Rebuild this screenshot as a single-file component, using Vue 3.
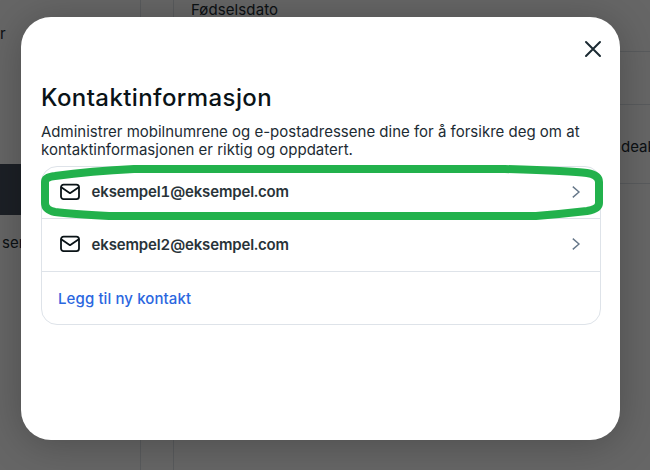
<script setup>
const contacts = ['eksempel1@eksempel.com', 'eksempel2@eksempel.com']
</script>

<template>
  <div class="page">
    <div class="sidebar">
      <span class="side-r">r</span>
      <div class="side-block"></div>
      <span class="side-ser">ser</span>
    </div>
    <div class="gutter"></div>
    <div class="main">
      <div class="main-row first"><span>Fødselsdato</span></div>
      <div class="main-row second"></div>
      <div class="main-row third"><span class="deak">deak</span></div>
    </div>

    <div class="overlay">
      <section class="modal">
        <button class="close" aria-label="Lukk">
          <svg width="24" height="24" viewBox="0 0 24 24" fill="none" stroke="#1c2b33" stroke-width="2" stroke-linecap="round">
            <path d="M5 5 19 19M19 5 5 19" />
          </svg>
        </button>
        <h2 class="title">Kontaktinformasjon</h2>
        <p class="desc">Administrer mobilnumrene og e-postadressene dine for å forsikre deg om at kontaktinformasjonen er riktig og oppdatert.</p>
        <div class="card">
          <div v-for="c in contacts" :key="c" class="row contact">
            <svg class="mail" width="20" height="20" viewBox="0 0 20 20" fill="none" stroke="#0a1317" stroke-width="1.8" stroke-linejoin="round" stroke-linecap="round">
              <rect x="1" y="2.6" width="18" height="14.6" rx="2.6" />
              <path d="M1.6 5.4 10 11.2l8.4-5.8" />
            </svg>
            <span class="addr">{{ c }}</span>
            <svg class="chev" width="10" height="14" viewBox="0 0 10 14" fill="none" stroke="#67788a" stroke-width="1.4">
              <path d="M1.8 1.6 8 7l-6.2 5.4" />
            </svg>
          </div>
          <div class="row add"><span>Legg til ny kontakt</span></div>
        </div>
        <svg class="mark" width="600" height="70" viewBox="0 0 600 70" fill="none" stroke="#22b14c" stroke-width="8" stroke-linejoin="round">
          <path d="M24 20Q24 15 34 14Q70 9 113 7L484 7Q550 9 566 11Q578 13 578 20L578 41Q578 47 566 49Q540 52 515 54L88 54Q50 52 34 50Q24 48 24 41Z" />
        </svg>
      </section>
    </div>
  </div>
</template>

<style scoped>
.page {
  position: relative;
  display: flex;
  width: 650px;
  height: 470px;
  overflow: hidden;
  background: #fff;
  font-family: Inter, "Liberation Sans", sans-serif;
  color: #1c2b33;
}
.sidebar {
  flex: none;
  width: 140px;
  border-right: 1px solid #dee3e9;
  display: flex;
  flex-direction: column;
  font-size: 15px;
}
.side-r { margin-top: 24px; height: 19px; line-height: 19px; }
.side-block { margin-top: 121px; height: 51px; background: #465260; }
.side-ser { margin-top: 18px; margin-left: 2px; line-height: 19px; }
.gutter { flex: none; width: 32px; border-right: 1px solid #dee3e9; }
.main { flex: 1; min-width: 0; display: flex; flex-direction: column; font-size: 15px; }
.main-row { border-bottom: 1px solid #dee3e9; padding-left: 17px; overflow: hidden; white-space: nowrap; }
.first { height: 51px; line-height: 19px; letter-spacing: 0.1px; }
.second { height: 52px; }
.third { height: 79px; padding-top: 32px; box-sizing: border-box; }
.deak { margin-left: 430px; }
.overlay {
  position: absolute;
  inset: 0;
  background: rgba(0, 0, 0, 0.6);
  padding: 17px 30px 30px 21px;
  box-sizing: border-box;
}
.modal {
  position: relative;
  box-sizing: border-box;
  width: 599px;
  height: 423px;
  background: #fff;
  border-radius: 30px;
  box-shadow: 0 4px 40px rgba(0, 0, 0, 0.25);
  padding: 66px 20px 0;
}
.close {
  position: absolute;
  top: 20px;
  right: 15px;
  width: 24px;
  height: 24px;
  padding: 0;
  border: 0;
  background: none;
}
.title {
  margin: 0;
  font-size: 24px;
  line-height: 30px;
  font-weight: 500;
  letter-spacing: 0.4px;
  color: #0a1317;
}
.desc {
  margin: 10px 0 0;
  font-size: 15px;
  line-height: 18px;
  color: #1c2b33;
}
.card {
  margin-top: 7px;
  margin-right: -1px;
  border: 1px solid #dee3e9;
  border-radius: 16px;
  overflow: hidden;
}
.row {
  display: flex;
  align-items: center;
  height: 52px;
  padding: 0 19px 0 18px;
  border-bottom: 1px solid #dee3e9;
}
.row.contact { padding-bottom: 2px; box-sizing: border-box; height: 53px; }
.row.contact:first-child { height: 52px; }
.row.add { border-bottom: 0; padding-left: 16px; }
.mail { flex: none; }
.addr {
  margin-left: 11.5px;
  flex: 1;
  font-size: 15px;
  font-weight: 600;
  font-variant-numeric: tabular-nums;
  letter-spacing: -0.14px;
  color: #283338;
}
.add span { font-size: 15px; font-weight: 500; letter-spacing: 0.1px; color: #2b67df; }
.mark {
  position: absolute;
  left: 0;
  top: 145px;
  pointer-events: none;
}
</style>

<style>
html, body { margin: 0; }
</style>
